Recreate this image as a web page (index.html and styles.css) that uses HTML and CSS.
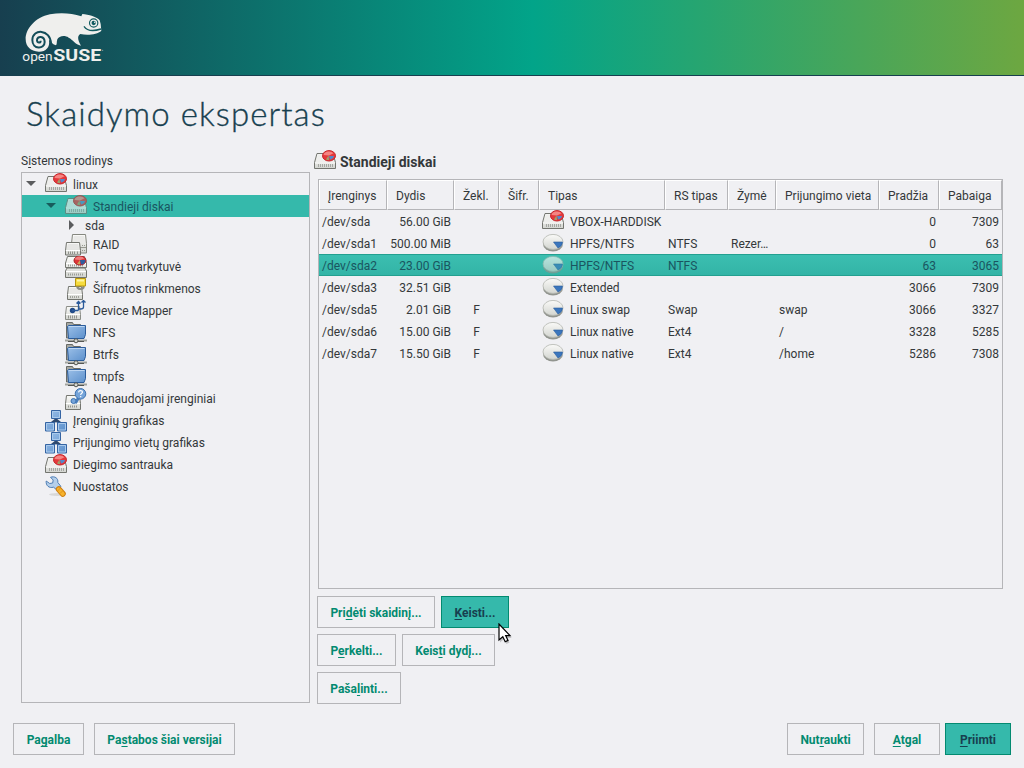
FILE: index.html
```html
<!DOCTYPE html>
<html lang="lt">
<head>
<meta charset="utf-8">
<title>Skaidymo ekspertas</title>
<link rel="stylesheet" href="styles.css">
</head>
<body>
<svg class="defs" aria-hidden="true">
  <defs>
    <linearGradient id="metal" x1="0" y1="0" x2="0" y2="1"><stop offset="0" stop-color="#fafaf8"/><stop offset="1" stop-color="#d3d5d0"/></linearGradient>
    <linearGradient id="blue" x1="0" y1="0" x2="1" y2="1"><stop offset="0" stop-color="#9cc0e8"/><stop offset="1" stop-color="#5c90cc"/></linearGradient>
    <symbol id="disk" viewBox="0 0 22 22">
      <path d="M3 3.500h16l2.500 9v6h-21v-6z" fill="url(#metal)" stroke="#73756f"/>
      <path d="M4 4.500h14l2 7.500h-18z" fill="#eeeeec"/>
      <path d="M1 13h20" stroke="#fff"/>
      <path d="M4.500 14v3M6.500 14v3M8.500 14v3M10.500 14v3M12.500 14v3M14.500 14v3M16.500 14v3M18.500 14v3" stroke="#a5a7a3"/>
      <ellipse cx="15" cy="5.800" rx="6.500" ry="5.200" fill="#e5383b" stroke="#c5262c"/>
      <path d="M9.500 5a5.500 4 0 0 1 10-1.800l-4.500 2.300z" fill="#f58583"/>
      <path d="M15 6h5a5 4 0 0 1-4 3.500z" fill="#5588c9"/><path d="M14.500 5.500l-2.500 4 3 .8z" fill="#9ba56c"/>
    </symbol>
    <symbol id="raid" viewBox="0 0 22 22">
      <path d="M7.500.5h13l1 9v9.500h-15v-9.500z" fill="url(#metal)" stroke="#85877f"/>
      <path d="M9 2h10l1 7H8z" fill="#e9e9e7"/><path d="M7 13.500h14" stroke="#96988f"/><path d="M17 16.500h4M17 11.500h4" stroke="#96988f" stroke-dasharray="1 1"/>
      <path d="M1.500 8.500h13l1 8v4.500H.5v-4.500z" fill="url(#metal)" stroke="#73756f"/>
      <path d="M3 10h10l1 5H2z" fill="#e6e6e4"/>
      <path d="M1 16.500h14" stroke="#fff"/><path d="M3.500 17.500v2.500M5.500 17.500v2.500M7.500 17.500v2.500M9.500 17.500v2.500M12.500 17.500v2.500" stroke="#90928c"/>
    </symbol>
    <symbol id="lvm" viewBox="0 0 22 22">
      <path d="M2.500.5h17l2 6.500v4.500H.5V7zM.5 15l1.500-3h18l1.500 3v6.500H.5z" fill="url(#metal)" stroke="#73756f"/>
      <path d="M1 7.500h20M1 15.500h20" stroke="#fff"/>
      <path d="M3 9.500h15M3 18.500h15" stroke="#9b9d97" stroke-width="2" stroke-dasharray="1 1"/>
      <ellipse cx="15" cy="4.500" rx="6" ry="4.500" fill="#df3537" stroke="#a91b22"/>
      <path d="M9.800 3.500a5 3.500 0 0 1 9.500-1l-4.300 1.500z" fill="#f27d7c"/>
      <path d="M15 4h5.500q-.5 4.500-4.500 4.500z" fill="#2e5d9f"/><path d="M15 4l-3 4 3 .5z" fill="#c8a65c"/>
    </symbol>
    <symbol id="crypt" viewBox="0 0 22 22">
      <path d="M3.500 8.500h13l1 8v5h-15v-5z" fill="url(#metal)" stroke="#73756f"/>
      <path d="M5 10h10l1 5.500H4z" fill="#e8e8e6"/><path d="M3 16.500h14" stroke="#fff"/>
      <path d="M5 19h10" stroke="#a2a49d" stroke-width="2" stroke-dasharray="1 1"/>
      <path d="M12.500 8v1.500a3.500 3 0 0 0 6 0V8" fill="none" stroke="#8a8c86" stroke-width="2.200"/>
      <path d="M10.500.5h10v7.500h-10z" fill="#f6dc3e" stroke="#b8960f"/><path d="M12 2.500h7" stroke="#fff5a2" stroke-width="2"/>
    </symbol>
    <symbol id="mapper" viewBox="0 0 22 22">
      <path d="M1.500 6.500h13l1 8v5H.5v-5z" fill="url(#metal)" stroke="#8b8d87"/>
      <path d="M1 14.500h14" stroke="#fff"/><path d="M3 17h10" stroke="#92948e" stroke-width="3" stroke-dasharray="1 1"/>
      <circle cx="7.500" cy="10.500" r="2.700" fill="#204a87"/>
      <path d="M7 10.500h6q.5 0 .5-3V2M11.500 3.500l2-2 2 2M16.500 2.500l2-2 2 2M18.500 1v6q0 2-3 2h-2" fill="none" stroke="#2b5a9a" stroke-width="1.300"/>
    </symbol>
    <symbol id="folder" viewBox="0 0 22 22">
      <path d="M1.500 16V.5h6l1 2h7v13z" fill="#a6a8a3" stroke="#696b66"/>
      <path d="M3.500 3.500h17v9l-1.500 4H3.500L2.500 4.500z" fill="url(#blue)" stroke="#2b5c9b"/>
      <path d="M4 4.500h15.500" stroke="#bdd6f2"/><path d="M0 18.500h22" stroke="#a2a49f" stroke-width="2"/><path d="M3 19.500h16" stroke="#555753"/>
      <circle cx="11" cy="18.800" r="2" fill="#d4d6d1" stroke="#555753"/>
    </symbol>
    <symbol id="unused" viewBox="0 0 22 22">
      <path d="M1.500 7.500h13l1 8v6H.5v-6z" fill="url(#metal)" stroke="#73756f"/><path d="M1 15.500h14" stroke="#fff"/><path d="M3 18.500h10" stroke="#92948e" stroke-width="2" stroke-dasharray="1 1"/>
      <path d="M14 9l-3 5-4-1" fill="none" stroke="#4b80bd" stroke-width="3"/><circle cx="8.500" cy="13" r="2.500" fill="#75a4d9" stroke="#3c72b1"/>
      <circle cx="15.500" cy="5.800" r="5.300" fill="#75a4d9" stroke="#3c72b1"/>
      <path d="M13.500 4.300q.3-1.700 2-1.700 2 0 2 1.500c0 1.300-1.800 1.200-1.800 2.900M15.700 8v1.300" fill="none" stroke="#fff" stroke-width="1.200"/>
    </symbol>
    <symbol id="graph" viewBox="0 0 22 22">
      <path d="M11 9v3M11 10l-5 4M11 10l5 4" stroke="#2f4a70" stroke-width="3"/>
      <g fill="url(#blue)" stroke="#3564a3"><path d="M6.500.5h9v8h-9zM.5 12.500h9v8.500h-9zM12.500 12.500h9v8.500h-9z"/></g>
      <path d="M7.500 1.500h7v6h-7zM1.500 13.500h7v6.500h-7zM13.500 13.500h7v6.500h-7z" fill="none" stroke="#aacaec"/>
    </symbol>
    <symbol id="tools" viewBox="0 0 22 22">
      <ellipse cx="12" cy="18.500" rx="8" ry="1.500" fill="#d8d8d8"/>
      <path d="M1.200 5l3.500 2.500 3-.5.500-3L5.500 1.300c4-1.500 8 .7 7.300 5.200l3.200 4-4 3.500-3.500-2.800C4 12.500.7 9.500 1.200 5z" fill="#b5cfea" stroke="#4f7eb5"/>
      <path d="M13.800 13.300l4 4.500" stroke="#ce7e0e" stroke-width="6" stroke-linecap="round"/><path d="M13.800 13.300l4 4.500" stroke="#f7b32c" stroke-width="4" stroke-linecap="round"/>
      <path d="M12.500 15l3-3M15 17.500l3-3" stroke="#e0941d"/>
    </symbol>
    <symbol id="part" viewBox="0 0 22 22">
      <ellipse cx="11" cy="12" rx="10" ry="7.500" fill="#92958f"/>
      <ellipse cx="11" cy="9.900" rx="10" ry="7.500" fill="url(#metal)" stroke="#b4b6b0" stroke-width=".8"/>
      <path d="M11.500 10h9q0 4-4.500 6z" fill="#3b76bd" stroke="#2a5d9c" stroke-width=".6"/>
    </symbol>
  </defs>
</svg>
<header class="banner">
  <svg class="logo" viewBox="60 33 258 171">
    <path d="M77 118C76 88 105 52 150 43C185 36 215 40 244 49L247 42C265 44 292 50 299 61L302 72L304 92C292 104 262 107 241 102C232 107 232 118 243 137C225 133 219 119 206 113C193 104 176 109 172 118C169 126 172 132 168 136C155 133 155 124 147 120C151 143 136 156 116 155C92 154 77 140 77 118Z" fill="#efefed"/>
    <path d="M153 130C151 87 98 85 97 120C97 149 134 149 134 126C134 107 111 106 111 121C112 130 122 129 122 122" fill="none" stroke="#134d59" stroke-width="6"/>
    <path d="M252 79C262 94 281 94 303 87" fill="none" stroke="#125b60" stroke-width="4"/>
    <circle cx="281" cy="69" r="12.500" fill="#efefed" stroke="#125b60" stroke-width="3.500"/><circle cx="281" cy="69" r="6.500" fill="#125b60"/><circle cx="284" cy="67" r="2.200" fill="#efefed"/>
    <text class="logo-open" x="67" y="183" textLength="91" lengthAdjust="spacingAndGlyphs">open</text>
    <text class="logo-suse" x="160" y="183" textLength="144" lengthAdjust="spacingAndGlyphs">SUSE</text>
    <circle cx="308" cy="151" r="1.500" fill="#a9c1c1"/>
  </svg>
</header>
<h1 class="title">Skaidymo ekspertas</h1>
<main class="content">
  <section class="side">
    <div class="side-label">S<u>i</u>stemos rodinys</div>
    <ul class="tree">
      <li class="node l0 low"><i class="arrow down"></i><svg class="ico"><use href="#disk"/></svg><span>linux</span></li>
      <li class="node l1 low selected"><i class="arrow down"></i><svg class="ico"><use href="#disk"/></svg><span>Standieji diskai</span></li>
      <li class="node l2 plain"><i class="arrow right"></i>sda</li>
      <li class="node l1"><i class="arrow"></i><svg class="ico"><use href="#raid"/></svg>RAID</li>
      <li class="node l1"><i class="arrow"></i><svg class="ico"><use href="#lvm"/></svg>Tomų tvarkytuvė</li>
      <li class="node l1"><i class="arrow"></i><svg class="ico"><use href="#crypt"/></svg>Šifruotos rinkmenos</li>
      <li class="node l1"><i class="arrow"></i><svg class="ico"><use href="#mapper"/></svg>Device Mapper</li>
      <li class="node l1"><i class="arrow"></i><svg class="ico"><use href="#folder"/></svg>NFS</li>
      <li class="node l1"><i class="arrow"></i><svg class="ico"><use href="#folder"/></svg>Btrfs</li>
      <li class="node l1"><i class="arrow"></i><svg class="ico"><use href="#folder"/></svg>tmpfs</li>
      <li class="node l1"><i class="arrow"></i><svg class="ico"><use href="#unused"/></svg>Nenaudojami įrenginiai</li>
      <li class="node l0"><i class="arrow"></i><svg class="ico"><use href="#graph"/></svg>Įrenginių grafikas</li>
      <li class="node l0"><i class="arrow"></i><svg class="ico"><use href="#graph"/></svg>Prijungimo vietų grafikas</li>
      <li class="node l0"><i class="arrow"></i><svg class="ico"><use href="#disk"/></svg>Diegimo santrauka</li>
      <li class="node l0"><i class="arrow"></i><svg class="ico"><use href="#tools"/></svg>Nuostatos</li>
    </ul>
  </section>
  <section class="main">
    <h2 class="heading"><svg class="ico"><use href="#disk"/></svg><span>Standieji diskai</span></h2>
    <div class="table-box">
      <table class="grid">
        <colgroup><col class="c1"><col class="c2"><col class="c3"><col class="c4"><col class="c5"><col class="c6"><col class="c7"><col class="c8"><col class="c9"><col class="c10"></colgroup>
        <thead><tr><th>Įrenginys</th><th>Dydis</th><th>Žekl.</th><th>Šifr.</th><th>Tipas</th><th>RS tipas</th><th>Žymė</th><th>Prijungimo vieta</th><th>Pradžia</th><th>Pabaiga</th></tr></thead>
        <tbody>
          <tr><td>/dev/sda</td><td class="num">56.00 GiB</td><td></td><td></td><td><div class="type"><svg class="ico"><use href="#disk"/></svg><span>VBOX-HARDDISK</span></div></td><td></td><td></td><td></td><td class="num">0</td><td class="num">7309</td></tr>
          <tr><td>/dev/sda1</td><td class="num">500.00 MiB</td><td></td><td></td><td><div class="type"><svg class="ico"><use href="#part"/></svg><span>HPFS/NTFS</span></div></td><td>NTFS</td><td>Rezer…</td><td></td><td class="num">0</td><td class="num">63</td></tr>
          <tr class="selected"><td>/dev/sda2</td><td class="num">23.00 GiB</td><td></td><td></td><td><div class="type"><svg class="ico"><use href="#part"/></svg><span>HPFS/NTFS</span></div></td><td>NTFS</td><td></td><td></td><td class="num">63</td><td class="num">3065</td></tr>
          <tr><td>/dev/sda3</td><td class="num">32.51 GiB</td><td></td><td></td><td><div class="type"><svg class="ico"><use href="#part"/></svg><span>Extended</span></div></td><td></td><td></td><td></td><td class="num">3066</td><td class="num">7309</td></tr>
          <tr><td>/dev/sda5</td><td class="num">2.01 GiB</td><td class="mid">F</td><td></td><td><div class="type"><svg class="ico"><use href="#part"/></svg><span>Linux swap</span></div></td><td>Swap</td><td></td><td>swap</td><td class="num">3066</td><td class="num">3327</td></tr>
          <tr><td>/dev/sda6</td><td class="num">15.00 GiB</td><td class="mid">F</td><td></td><td><div class="type"><svg class="ico"><use href="#part"/></svg><span>Linux native</span></div></td><td>Ext4</td><td></td><td>/</td><td class="num">3328</td><td class="num">5285</td></tr>
          <tr><td>/dev/sda7</td><td class="num">15.50 GiB</td><td class="mid">F</td><td></td><td><div class="type"><svg class="ico"><use href="#part"/></svg><span>Linux native</span></div></td><td>Ext4</td><td></td><td>/home</td><td class="num">5286</td><td class="num">7308</td></tr>
        </tbody>
      </table>
    </div>
    <div class="actions">
      <div class="row"><button class="btn w118">Pri<u>d</u>ėti skaidinį...</button><button class="btn primary w68"><u>K</u>eisti...</button></div>
      <div class="row"><button class="btn w79">P<u>e</u>rkelti...</button><button class="btn w93">Keis<u>t</u>i dydį...</button></div>
      <div class="row"><button class="btn w84">Paša<u>l</u>inti...</button></div>
    </div>
  </section>
</main>
<footer class="footer">
  <div class="group"><button class="btn w71">Pa<u>g</u>alba</button><button class="btn w141">Pa<u>s</u>tabos šiai versijai</button></div>
  <div class="group"><button class="btn w77">Nut<u>r</u>aukti</button><button class="btn w66"><u>A</u>tgal</button><button class="btn primary w66 accept"><u>P</u>riimti</button></div>
</footer>
<svg class="cursor" viewBox="0 0 14 22"><path d="M2 2.500v17l4-3.500 2.500 5 3-1.500-2.300-4.500h4.500z" fill="#0003"/><path d="M1 1v16l3.800-3.300 2.400 5 2.800-1.300-2.300-4.800H12z" fill="#fff" stroke="#000" stroke-width="1.200"/></svg>
</body>
</html>
```

FILE: styles.css
```css
* { box-sizing: border-box; }
body {
  margin: 0;
  width: 1024px;
  height: 768px;
  overflow: hidden;
  position: relative;
  background: #f0f0f3;
  color: #34383a;
  font: 12px/22px Roboto, "Noto Sans", sans-serif;
}
.defs { position: absolute; width: 0; height: 0; }
u { text-decoration: underline 1px; text-underline-offset: 2px; text-decoration-skip-ink: none; }
.banner {
  height: 76px;
  padding: 11px 0 0 20px;
  border-bottom: 1px solid #173f4f;
  background: linear-gradient(90deg, #173f4f 0%, #02a489 52%, #6da741 100%);
}
.logo { display: block; width: 86px; height: 57px; }
.logo text { fill: #efefed; }
.logo-open { font: 400 38px Roboto, sans-serif; }
.logo-suse { font: 700 47px Roboto, sans-serif; }
.title {
  margin: 0;
  height: 74px;
  padding: 17px 0 0 26px;
  color: #173f4f;
  font: 300 33px/40px Lato, sans-serif;
  letter-spacing: 1.08px;
  -webkit-text-stroke: .35px #173f4f;
}
.content { display: flex; height: 554px; }
.side { width: 310px; padding-left: 21px; }
.side-label { height: 22px; }
.tree {
  list-style: none;
  margin: 0;
  padding: 0;
  height: 531px;
  border: 1px solid #b5b5b8;
}
.node { display: flex; align-items: center; height: 22px; white-space: nowrap; }
.node .ico { margin-right: 6px; }
.low span { padding-top: 2px; }
.l0 { padding-left: 3px; }
.l1 { padding-left: 23px; }
.l2 { padding-left: 43px; }
.plain { height: 17px; }
.ico { display: block; flex: none; width: 22px; height: 22px; }
.arrow { width: 20px; height: 20px; display: flex; align-items: center; flex: none; }
.down::before { content: ""; margin: -1px 0 0 1px; border: 5px solid transparent; border-bottom: 0; border-top-color: #5b5c5e; }
.right::before { content: ""; margin: -2px 0 0 4px; border: 5px solid transparent; border-right: 0; border-left-color: #5b5c5e; }
.selected { background: #35b9ab; color: #1a5560; }
.selected .ico { opacity: .65; }
.node.selected .down::before { border-top-color: #175c5c; }
.main { width: 690px; padding-left: 8px; }
.heading {
  display: flex;
  gap: 4px;
  align-items: center;
  height: 22px;
  margin: -1px 0 8px -4px;
  font: 700 14px/22px Roboto, sans-serif;
}
.heading span { padding-top: 4px; }
.heading .ico { margin-top: 2px; }
.table-box { width: 685px; height: 410px; border: 1px solid #b5b5b8; }
.grid { width: 683px; table-layout: fixed; border-collapse: separate; border-spacing: 0; }
.c1 { width: 68px; } .c2 { width: 67px; } .c3 { width: 45px; } .c4 { width: 40px; } .c5 { width: 126px; }
.c6 { width: 63px; } .c7 { width: 48px; } .c8 { width: 103px; } .c9 { width: 60px; } .c10 { width: 63px; }
.grid th {
  height: 30px;
  padding: 2px 0 0 8px;
  text-align: left;
  font-weight: 400;
  line-height: 20px;
  white-space: nowrap;
  border: solid;
  border-width: 1px;
  border-color: #fff #b5b5b8 #b5b5b8 #fff;
}
.grid td { height: 22px; padding: 2px 3px 0; line-height: 20px; white-space: nowrap; }
.grid .num { text-align: right; }
.grid .mid { text-align: center; }
.grid .selected { background: linear-gradient(#3cbfb1, #32b4a6); }
.grid .selected td { padding-top: 2px; line-height: 18px; border: solid #23a090; border-width: 1px 0; }
.type { display: flex; align-items: center; height: 20px; gap: 6px; }
.type .ico { margin-top: -2px; }
.selected .type { height: 18px; }
.actions { display: flex; flex-direction: column; gap: 6px; margin: 7px 0 0 -1px; }
.row { display: flex; gap: 6px; }
.btn {
  height: 32px;
  padding: 2px 0 0;
  border: 1px solid #b5b5b8;
  border-radius: 0;
  background: #f0f0f3;
  color: #038a70;
  font: 700 12px/22px Roboto, sans-serif;
  white-space: nowrap;
}
.primary { background: #35b9ab; border-color: #038a70; color: #173f4f; }
.w66 { width: 66px; } .w68 { width: 68px; } .w71 { width: 71px; } .w77 { width: 77px; } .w79 { width: 79px; }
.w84 { width: 84px; } .w93 { width: 93px; } .w118 { width: 118px; } .w141 { width: 141px; }
.footer { display: flex; justify-content: space-between; padding: 19px 13px 0; }
.group { display: flex; gap: 10px; }
.accept { margin-left: -5px; }
.cursor { position: absolute; left: 498px; top: 623px; width: 14px; height: 22px; }
```
